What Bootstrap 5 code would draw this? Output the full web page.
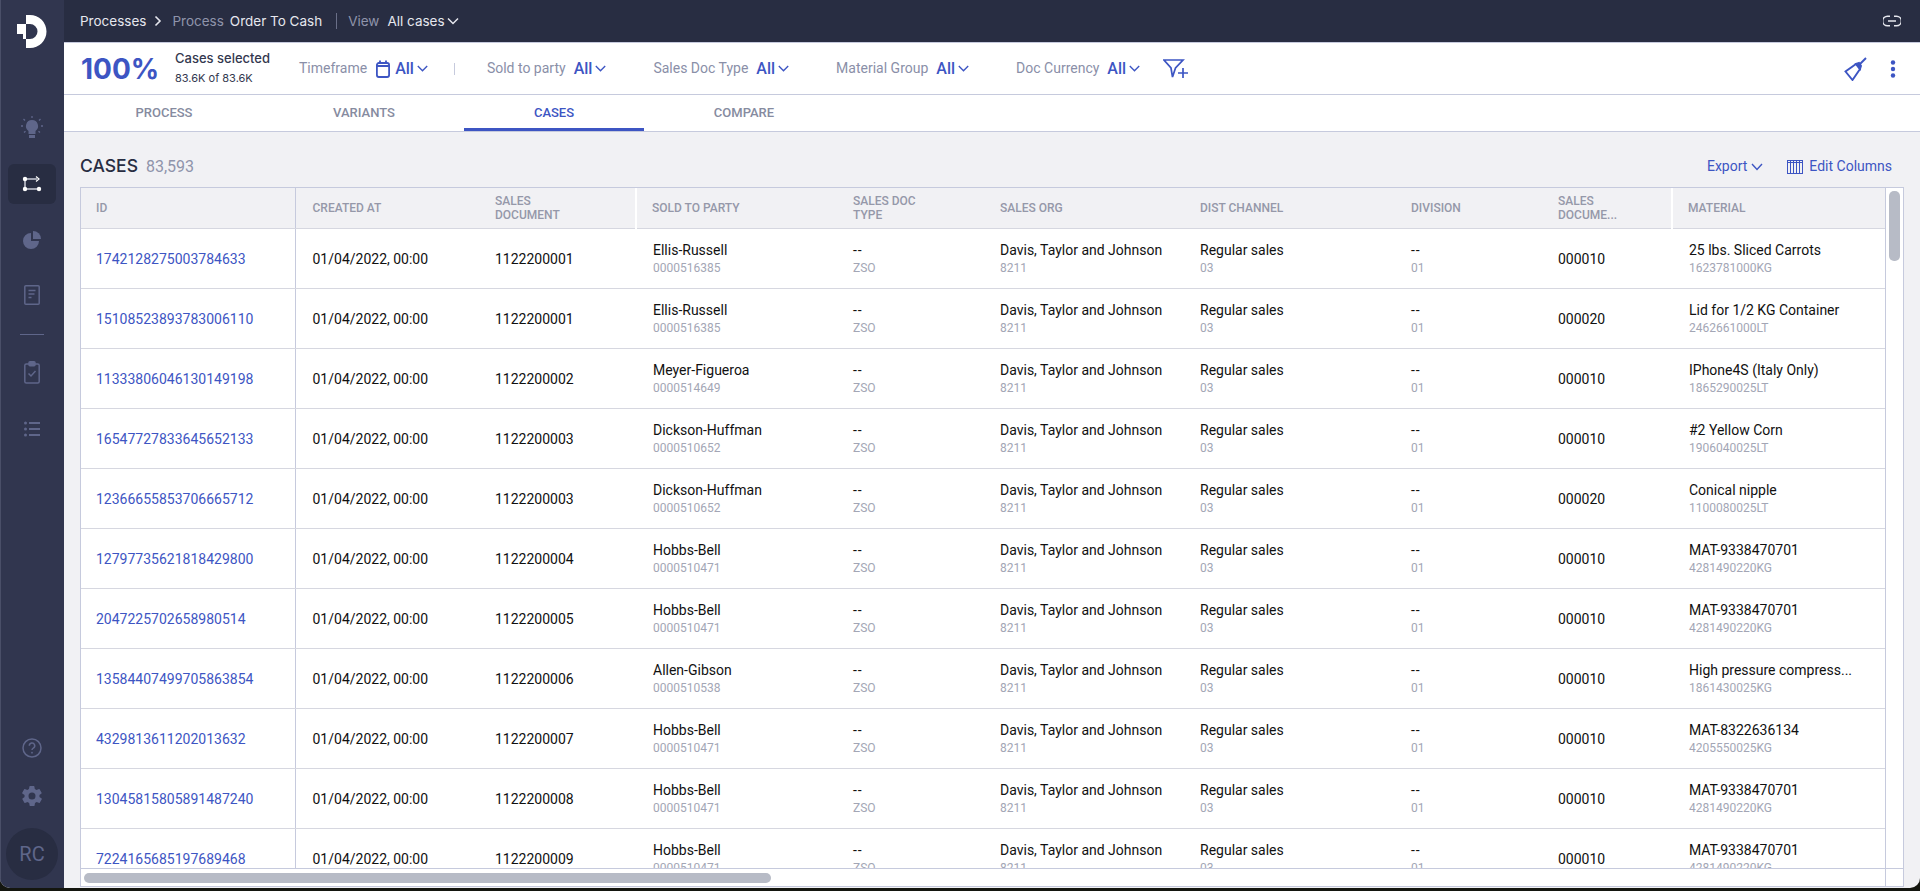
<!doctype html>
<html lang="en">
<head>
<meta charset="utf-8">
<title>Cases</title>
<link href="https://cdn.jsdelivr.net/npm/bootstrap@5.3.0/dist/css/bootstrap.min.css" rel="stylesheet">
<style>
:root{--blue:#3d55c3;--line:#c6cadd;--rowline:#d6d7e0;--muted:#8f94ab;}
html,body{height:891px;overflow:hidden;background:#14160f;}
body{font-family:"Roboto",sans-serif;font-size:14px;color:#111;}
.app-window{height:888px;border-radius:0 0 10px 10px;overflow:hidden;background:#f1f1f4;}
.side-rail{width:64px;flex:none;background:#31364f;box-shadow:inset 1px 0 0 #4a4f68;}
.side-logo{height:42px;margin-bottom:52px;margin-top:14px;}
.rail-btn{width:48px;height:40px;border-radius:6px;color:#5f668a;}
.rail-btn.is-on{background:#282d42;color:#fff;}
.gap-16{margin-top:16px;}
.gap-15{margin-top:15px;}
.gap-17{margin-top:17px;}
.gap-8b{margin-top:8px;margin-bottom:12px;}
.rail-rule{width:24px;height:1px;background:#5f668a;margin-top:19px;}
.rail-avatar{width:52px;height:52px;border-radius:50%;background:#282d42;color:#5f668a;font-size:20px;margin-bottom:8px;}
.crumbbar{height:43px;background:#282d42;border-bottom:1px solid var(--line);font-family:"Inter",sans-serif;font-size:13.5px;color:#e6e7ee;padding:0 19px 0 16px;}
.crumb-dim{color:#8f94ab;}
.crumb-rule{width:1px;height:16px;background:#6a6f88;margin:0 11px 0 14px;}
.crumb-chev{margin:0 10px 0 8px;}
.crumb-gap-6{margin-left:6px;}
.crumb-gap-8{margin-left:8px;}
.crumb-end{margin-left:2px;}
.filterbar{height:52px;background:#fff;border-bottom:1px solid var(--line);padding:0 16px;}
.pct-big{font-family:"Inter",sans-serif;font-weight:700;font-size:28px;color:var(--blue);width:95px;line-height:1;padding-left:1px;}
.sel-head{font-family:"Inter",sans-serif;font-weight:500;font-size:13px;color:#33384f;line-height:16px;margin-top:-2px;}
.sel-sub{font-family:"Inter",sans-serif;font-size:11px;color:#33384f;line-height:16px;margin-top:4px;}
.sel-box{width:124px;}
.flt-label{font-family:"Roboto",sans-serif;font-size:14px;color:#8a8fa8;}
.flt-val{font-size:16px;font-weight:500;color:var(--blue);line-height:1;}
.flt-cal{margin-left:9px;margin-right:5px;}
.flt-chev{margin-left:3px;}
.flt-rule{width:1px;height:12px;background:var(--line);margin-left:26px;margin-right:32px;}
.flt-next{margin-left:47px;}
.flt-funnel{margin-left:23px;}
.flt-kebab{margin-left:23px;margin-right:8px;}
.tabrow{height:37px;background:#fff;border-bottom:1px solid var(--line);}
.tab-cell{width:200px;height:36px;font-size:13px;font-weight:500;color:#868ba0;text-transform:uppercase;}
.tab-cell.is-on{width:180px;color:var(--blue);border-bottom:3px solid var(--blue);padding-top:3px;}
.titlebar{height:55px;padding:14px 16px 0;}
.title-main{font-family:"Inter",sans-serif;font-weight:500;font-size:17.5px;color:#282d42;}
.title-count{font-size:16px;color:#8f94ab;}
.tool-link{color:var(--blue);font-size:14px;}
.tool-chev{margin-right:24px;}
.tool-cols{margin-right:6px;}
.tool-end{margin-right:12px;}
.grid-frame{height:700px;margin:0 16px;border:1px solid var(--line);background:#fff;display:grid;grid-template-columns:1fr 18px;grid-template-rows:1fr 18px;}
.grid-view{overflow:hidden;min-width:0;min-height:0;}
.case-table{table-layout:fixed;width:1804px;margin:0;border-collapse:collapse;}
.case-table th{height:40px;background:#f1f1f4;font-size:12px;font-weight:500;color:#9598a9;text-transform:uppercase;line-height:14px;padding:0 8px 0 17px;border-bottom:1px solid var(--rowline);vertical-align:middle;}
.case-table th.col-id,.case-table td.col-id{padding-left:15px;border-right:1px solid var(--line);}
.case-table th.hd-sep{border-left:2px solid #fff;padding-left:15px;}
.case-table td{height:60px;padding:2px 8px 0 17px;border-bottom:1px solid var(--rowline);vertical-align:middle;font-size:14px;color:#111;line-height:17px;background:#fff;white-space:nowrap;box-shadow:none;}
.case-table a{color:var(--blue);text-decoration:none;}
.sub-txt{display:block;font-size:12px;color:#a3a6b5;line-height:15px;margin-top:2px;}
.dash-txt{letter-spacing:1px;}
.cw-id{width:214px;}.cw-at{width:183px;}.cw-doc{width:158px;}.cw-sold{width:200px;}.cw-type{width:147px;}.cw-org{width:200px;}.cw-chan{width:211px;}.cw-div{width:147px;}.cw-item{width:131px;}.cw-mat{width:213px;}
.v-track{border-left:1px solid var(--line);padding:3px 3px 0 3px;}
.v-thumb{height:70px;background:#b7bbc6;border-radius:5px;}
.h-track{border-top:1px solid var(--line);padding:4px 3px 0 3px;}
.h-thumb{width:687px;height:10px;background:#b7bbc6;border-radius:5px;}
.corner-cell{border-top:1px solid var(--line);border-left:1px solid var(--line);}
</style>
</head>
<body>
<div class="app-window d-flex">
  <aside class="side-rail d-flex flex-column align-items-center">
    <div class="side-logo">
      <svg width="32" height="36" viewBox="16 14 32 36"><path fill="#fff" d="M26 15h4a16.500 16.500 0 0 1 0 33h-4v-9h4a7.500 7.500 0 0 0 0-15h-4zM17 24h9v15h-3v-5h-6z"/></svg>
    </div>
    <div class="rail-btn d-flex align-items-center justify-content-center">
      <svg width="22" height="24" viewBox="0 0 22 24" fill="currentColor"><path d="M11 4a6 6 0 0 0-3.500 10.900V18h7v-3.100A6 6 0 0 0 11 4zM8 19h6v3H8z"/><path d="M11 0v2M2.500 3l1.500 1.500M19.500 3 18 4.500M0 10h2M20 10h2M3 16.500l1.500-1.300M19 16.500l-1.500-1.300" stroke="currentColor" stroke-width="1.300" fill="none"/></svg>
    </div>
    <div class="rail-btn is-on gap-16 d-flex align-items-center justify-content-center">
      <svg width="20" height="16" viewBox="0 0 20 16" fill="none" stroke="#fff"><path d="M3 3h12M3 3v10M3 13h14" stroke-width="1.500" stroke="#c9cbd6"/><path d="m14 .5 3 2.500-3 2.500" stroke-width="1.200"/><circle cx="3" cy="3" r="2.200" fill="#fff" stroke="none"/><circle cx="3" cy="13" r="2.200" fill="#fff" stroke="none"/><circle cx="17" cy="13" r="2.200" fill="#fff" stroke="none"/></svg>
    </div>
    <div class="rail-btn gap-16 d-flex align-items-center justify-content-center">
      <svg width="18" height="18" viewBox="0 0 18 18" fill="currentColor"><path d="M8 2a8 8 0 1 0 8 8H8z"/><path d="M10 0a8 8 0 0 1 8 8h-8z"/></svg>
    </div>
    <div class="rail-btn gap-15 d-flex align-items-center justify-content-center">
      <svg width="16" height="20" viewBox="0 0 16 20" fill="none" stroke="currentColor" stroke-width="1.500"><rect x=".8" y=".8" width="14.400" height="18.400" rx="1"/><path d="M4.500 5.500h7M4.500 9h6M4.500 12.500h3"/></svg>
    </div>
    <div class="rail-rule"></div>
    <div class="rail-btn gap-17 d-flex align-items-center justify-content-center">
      <svg width="16" height="23" viewBox="0 0 16 23" fill="none" stroke="currentColor" stroke-width="1.500"><rect x=".8" y="3" width="14.400" height="19" rx="1.500"/><rect x="5" y=".8" width="6" height="4" rx="1" fill="currentColor"/><path d="m4.500 12.500 2.500 2.500 4.500-5"/></svg>
    </div>
    <div class="rail-btn gap-17 d-flex align-items-center justify-content-center">
      <svg width="16" height="16" viewBox="0 0 16 16" fill="currentColor"><circle cx="1.500" cy="2" r="1.500"/><circle cx="1.500" cy="8" r="1.500"/><circle cx="1.500" cy="14" r="1.500"/><path d="M5 1h11v2H5zM5 7h11v2H5zM5 13h11v2H5z"/></svg>
    </div>
    <div class="flex-grow-1"></div>
    <div class="rail-btn d-flex align-items-center justify-content-center">
      <svg width="20" height="20" viewBox="0 0 20 20" fill="none" stroke="currentColor" stroke-width="1.500"><circle cx="10" cy="10" r="9"/><path d="M7.300 7.800a2.700 2.700 0 1 1 4 2.300c-.9.500-1.300 1-1.300 2"/><circle cx="10" cy="14.700" r=".9" fill="currentColor" stroke="none"/></svg>
    </div>
    <div class="rail-btn gap-8b d-flex align-items-center justify-content-center">
      <svg width="24" height="24" viewBox="0 0 24 24" fill="currentColor"><path d="M19.400 13c.1-.3.100-.7.100-1s0-.7-.1-1l2.100-1.600a.5.500 0 0 0 .1-.6l-2-3.500a.5.500 0 0 0-.6-.2l-2.500 1a7 7 0 0 0-1.700-1l-.4-2.700a.5.500 0 0 0-.5-.4h-4a.5.500 0 0 0-.5.400l-.4 2.700a7 7 0 0 0-1.700 1l-2.500-1a.5.500 0 0 0-.6.200l-2 3.500a.5.500 0 0 0 .1.600L4.600 11c-.1.300-.1.700-.1 1s0 .7.100 1l-2.100 1.600a.5.500 0 0 0-.1.600l2 3.500c.1.200.4.300.6.200l2.500-1c.5.400 1.100.7 1.700 1l.4 2.700c0 .2.200.4.500.4h4c.3 0 .5-.2.500-.4l.4-2.700a7 7 0 0 0 1.700-1l2.500 1c.2.100.5 0 .6-.2l2-3.500a.5.500 0 0 0-.1-.6zM12 15.500a3.500 3.500 0 1 1 0-7 3.500 3.500 0 0 1 0 7z"/></svg>
    </div>
    <div class="rail-avatar d-flex align-items-center justify-content-center">RC</div>
  </aside>

  <main class="flex-grow-1 d-flex flex-column min-w-0">
    <div class="crumbbar d-flex align-items-center">
      <span>Processes</span>
      <svg class="crumb-chev" width="8" height="12" viewBox="0 0 8 12" fill="none" stroke="#e6e7ee" stroke-width="1.600"><path d="m1.500 1.500 4.500 4.500-4.500 4.500"/></svg>
      <span class="crumb-dim">Process</span>
      <span class="crumb-gap-6">Order To Cash</span>
      <span class="crumb-rule"></span>
      <span class="crumb-dim">View</span>
      <span class="crumb-gap-8">All cases</span>
      <svg class="crumb-end" width="12" height="8" viewBox="0 0 12 8" fill="none" stroke="#e6e7ee" stroke-width="1.500"><path d="m1 1.500 5 5 5-5"/></svg>
      <div class="flex-grow-1"></div>
      <svg width="18" height="12" viewBox="0 0 18 12" fill="none" stroke="#e6e7ee" stroke-width="1.400"><path d="M7 1.200H4.500a4.800 4.800 0 0 0 0 9.600H7M11 1.200h2.500a4.800 4.800 0 0 1 0 9.600H11M5 6h8"/></svg>
    </div>

    <div class="filterbar d-flex align-items-center">
      <div class="pct-big">100%</div>
      <div class="sel-box"><div class="sel-head">Cases selected</div><div class="sel-sub">83.6K of 83.6K</div></div>
      <div class="d-flex align-items-center">
        <span class="flt-label">Timeframe</span>
        <svg class="flt-cal" width="14" height="18" viewBox="0 0 14 18" fill="none" stroke="#3d55c3" stroke-width="1.800"><rect x=".9" y="3" width="12.200" height="14" rx="2"/><path d="M.9 6h12.200M4 .5v3M10 .5v3"/></svg>
        <span class="flt-val">All</span>
        <svg class="flt-chev" width="11" height="7" viewBox="0 0 11 7" fill="none" stroke="#3d55c3" stroke-width="1.400"><path d="m.8 1 4.700 4.700L10.200 1"/></svg>
      </div>
      <span class="flt-rule"></span>
      <div class="d-flex align-items-center">
        <span class="flt-label">Sold to party</span>
        <span class="flt-val ms-2">All</span>
        <svg class="flt-chev" width="11" height="7" viewBox="0 0 11 7" fill="none" stroke="#3d55c3" stroke-width="1.400"><path d="m.8 1 4.700 4.700L10.200 1"/></svg>
      </div>
      <div class="flt-next d-flex align-items-center">
        <span class="flt-label">Sales Doc Type</span>
        <span class="flt-val ms-2">All</span>
        <svg class="flt-chev" width="11" height="7" viewBox="0 0 11 7" fill="none" stroke="#3d55c3" stroke-width="1.400"><path d="m.8 1 4.700 4.700L10.200 1"/></svg>
      </div>
      <div class="flt-next d-flex align-items-center">
        <span class="flt-label">Material Group</span>
        <span class="flt-val ms-2">All</span>
        <svg class="flt-chev" width="11" height="7" viewBox="0 0 11 7" fill="none" stroke="#3d55c3" stroke-width="1.400"><path d="m.8 1 4.700 4.700L10.200 1"/></svg>
      </div>
      <div class="flt-next d-flex align-items-center">
        <span class="flt-label">Doc Currency</span>
        <span class="flt-val ms-2">All</span>
        <svg class="flt-chev" width="11" height="7" viewBox="0 0 11 7" fill="none" stroke="#3d55c3" stroke-width="1.400"><path d="m.8 1 4.700 4.700L10.200 1"/></svg>
      </div>
      <svg class="flt-funnel" width="27" height="20" viewBox="0 0 27 20" fill="none" stroke="#3d55c3" stroke-width="1.700"><path d="M1 1h19l-7.500 8-3 9-1.500-9z"/><path d="M15 14h10M20 9v10"/></svg>
      <div class="flex-grow-1"></div>
      <svg width="23" height="24" viewBox="0 0 23 24" fill="none" stroke="#3d55c3" stroke-width="1.900"><path d="m22 1-8 8"/><path d="M12 7 1.500 14.500 8.500 23 16 12z"/><path d="m12 7 4 5 1-3-2-3z" fill="#3d55c3"/></svg>
      <svg class="flt-kebab" width="6" height="18" viewBox="0 0 6 18" fill="#3d55c3"><circle cx="3" cy="2.500" r="2.200"/><circle cx="3" cy="9" r="2.200"/><circle cx="3" cy="15.500" r="2.200"/></svg>
    </div>

    <div class="tabrow d-flex">
      <div class="tab-cell d-flex align-items-center justify-content-center">Process</div>
      <div class="tab-cell d-flex align-items-center justify-content-center">Variants</div>
      <div class="tab-cell is-on d-flex align-items-center justify-content-center">Cases</div>
      <div class="tab-cell d-flex align-items-center justify-content-center">Compare</div>
    </div>

    <div class="titlebar d-flex align-items-center">
      <span class="title-main">CASES</span>
      <span class="title-count ms-2">83,593</span>
      <div class="flex-grow-1"></div>
      <span class="tool-link">Export</span>
      <svg class="ms-1 tool-chev" width="12" height="8" viewBox="0 0 12 8" fill="none" stroke="#3d55c3" stroke-width="1.400"><path d="m1 1 5 5.500L11 1"/></svg>
      <svg class="tool-cols" width="16" height="14" viewBox="0 0 16 14" fill="none" stroke="#3d55c3" stroke-width="1"><rect x=".5" y=".5" width="15" height="13"/><path d="M.5 2.500h15M3.500 .5v13M6.500 .5v13M9.500 .5v13M12.500 .5v13"/></svg>
      <span class="tool-link tool-end">Edit Columns</span>
    </div>

    <div class="grid-frame">
      <div class="grid-view">
        <table class="table case-table">
          <colgroup><col class="cw-id"><col class="cw-at"><col class="cw-doc"><col class="cw-sold"><col class="cw-type"><col class="cw-org"><col class="cw-chan"><col class="cw-div"><col class="cw-item"><col class="cw-mat"></colgroup>
          <thead><tr>
            <th class="col-id">ID</th><th>Created at</th><th>Sales<br>document</th><th class="hd-sep">Sold to party</th><th>Sales doc<br>type</th><th>Sales org</th><th>Dist channel</th><th>Division</th><th>Sales<br>docume...</th><th class="hd-sep">Material</th>
          </tr></thead>
          <tbody>
            <tr><td class="col-id"><a href="#">1742128275003784633</a></td><td>01/04/2022, 00:00</td><td>1122200001</td><td>Ellis-Russell<span class="sub-txt">0000516385</span></td><td><span class="dash-txt">--</span><span class="sub-txt">ZSO</span></td><td>Davis, Taylor and Johnson<span class="sub-txt">8211</span></td><td>Regular sales<span class="sub-txt">03</span></td><td><span class="dash-txt">--</span><span class="sub-txt">01</span></td><td>000010</td><td>25 lbs. Sliced Carrots<span class="sub-txt">1623781000KG</span></td></tr>
            <tr><td class="col-id"><a href="#">15108523893783006110</a></td><td>01/04/2022, 00:00</td><td>1122200001</td><td>Ellis-Russell<span class="sub-txt">0000516385</span></td><td><span class="dash-txt">--</span><span class="sub-txt">ZSO</span></td><td>Davis, Taylor and Johnson<span class="sub-txt">8211</span></td><td>Regular sales<span class="sub-txt">03</span></td><td><span class="dash-txt">--</span><span class="sub-txt">01</span></td><td>000020</td><td>Lid for 1/2 KG Container<span class="sub-txt">2462661000LT</span></td></tr>
            <tr><td class="col-id"><a href="#">11333806046130149198</a></td><td>01/04/2022, 00:00</td><td>1122200002</td><td>Meyer-Figueroa<span class="sub-txt">0000514649</span></td><td><span class="dash-txt">--</span><span class="sub-txt">ZSO</span></td><td>Davis, Taylor and Johnson<span class="sub-txt">8211</span></td><td>Regular sales<span class="sub-txt">03</span></td><td><span class="dash-txt">--</span><span class="sub-txt">01</span></td><td>000010</td><td>IPhone4S (Italy Only)<span class="sub-txt">1865290025LT</span></td></tr>
            <tr><td class="col-id"><a href="#">16547727833645652133</a></td><td>01/04/2022, 00:00</td><td>1122200003</td><td>Dickson-Huffman<span class="sub-txt">0000510652</span></td><td><span class="dash-txt">--</span><span class="sub-txt">ZSO</span></td><td>Davis, Taylor and Johnson<span class="sub-txt">8211</span></td><td>Regular sales<span class="sub-txt">03</span></td><td><span class="dash-txt">--</span><span class="sub-txt">01</span></td><td>000010</td><td>#2 Yellow Corn<span class="sub-txt">1906040025LT</span></td></tr>
            <tr><td class="col-id"><a href="#">12366655853706665712</a></td><td>01/04/2022, 00:00</td><td>1122200003</td><td>Dickson-Huffman<span class="sub-txt">0000510652</span></td><td><span class="dash-txt">--</span><span class="sub-txt">ZSO</span></td><td>Davis, Taylor and Johnson<span class="sub-txt">8211</span></td><td>Regular sales<span class="sub-txt">03</span></td><td><span class="dash-txt">--</span><span class="sub-txt">01</span></td><td>000020</td><td>Conical nipple<span class="sub-txt">1100080025LT</span></td></tr>
            <tr><td class="col-id"><a href="#">12797735621818429800</a></td><td>01/04/2022, 00:00</td><td>1122200004</td><td>Hobbs-Bell<span class="sub-txt">0000510471</span></td><td><span class="dash-txt">--</span><span class="sub-txt">ZSO</span></td><td>Davis, Taylor and Johnson<span class="sub-txt">8211</span></td><td>Regular sales<span class="sub-txt">03</span></td><td><span class="dash-txt">--</span><span class="sub-txt">01</span></td><td>000010</td><td>MAT-9338470701<span class="sub-txt">4281490220KG</span></td></tr>
            <tr><td class="col-id"><a href="#">2047225702658980514</a></td><td>01/04/2022, 00:00</td><td>1122200005</td><td>Hobbs-Bell<span class="sub-txt">0000510471</span></td><td><span class="dash-txt">--</span><span class="sub-txt">ZSO</span></td><td>Davis, Taylor and Johnson<span class="sub-txt">8211</span></td><td>Regular sales<span class="sub-txt">03</span></td><td><span class="dash-txt">--</span><span class="sub-txt">01</span></td><td>000010</td><td>MAT-9338470701<span class="sub-txt">4281490220KG</span></td></tr>
            <tr><td class="col-id"><a href="#">13584407499705863854</a></td><td>01/04/2022, 00:00</td><td>1122200006</td><td>Allen-Gibson<span class="sub-txt">0000510538</span></td><td><span class="dash-txt">--</span><span class="sub-txt">ZSO</span></td><td>Davis, Taylor and Johnson<span class="sub-txt">8211</span></td><td>Regular sales<span class="sub-txt">03</span></td><td><span class="dash-txt">--</span><span class="sub-txt">01</span></td><td>000010</td><td>High pressure compress...<span class="sub-txt">1861430025KG</span></td></tr>
            <tr><td class="col-id"><a href="#">4329813611202013632</a></td><td>01/04/2022, 00:00</td><td>1122200007</td><td>Hobbs-Bell<span class="sub-txt">0000510471</span></td><td><span class="dash-txt">--</span><span class="sub-txt">ZSO</span></td><td>Davis, Taylor and Johnson<span class="sub-txt">8211</span></td><td>Regular sales<span class="sub-txt">03</span></td><td><span class="dash-txt">--</span><span class="sub-txt">01</span></td><td>000010</td><td>MAT-8322636134<span class="sub-txt">4205550025KG</span></td></tr>
            <tr><td class="col-id"><a href="#">13045815805891487240</a></td><td>01/04/2022, 00:00</td><td>1122200008</td><td>Hobbs-Bell<span class="sub-txt">0000510471</span></td><td><span class="dash-txt">--</span><span class="sub-txt">ZSO</span></td><td>Davis, Taylor and Johnson<span class="sub-txt">8211</span></td><td>Regular sales<span class="sub-txt">03</span></td><td><span class="dash-txt">--</span><span class="sub-txt">01</span></td><td>000010</td><td>MAT-9338470701<span class="sub-txt">4281490220KG</span></td></tr>
            <tr><td class="col-id"><a href="#">7224165685197689468</a></td><td>01/04/2022, 00:00</td><td>1122200009</td><td>Hobbs-Bell<span class="sub-txt">0000510471</span></td><td><span class="dash-txt">--</span><span class="sub-txt">ZSO</span></td><td>Davis, Taylor and Johnson<span class="sub-txt">8211</span></td><td>Regular sales<span class="sub-txt">03</span></td><td><span class="dash-txt">--</span><span class="sub-txt">01</span></td><td>000010</td><td>MAT-9338470701<span class="sub-txt">4281490220KG</span></td></tr>
          </tbody>
        </table>
      </div>
      <div class="v-track"><div class="v-thumb"></div></div>
      <div class="h-track"><div class="h-thumb"></div></div>
      <div class="corner-cell"></div>
    </div>
  </main>
</div>
<script src="https://cdn.jsdelivr.net/npm/bootstrap@5.3.0/dist/js/bootstrap.bundle.min.js"></script>
</body>
</html>
